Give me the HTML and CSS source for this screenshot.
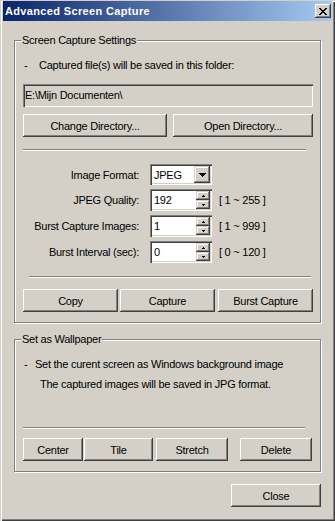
FILE: index.html
```html
<!DOCTYPE html>
<html lang="en">
<head>
    <meta charset="UTF-8">
    <meta name="viewport" content="width=device-width, initial-scale=1.0">
    <title>Advanced Screen Capture</title>
    <link rel="stylesheet" href="styles.css">
</head>
<body>
    <div class="window">
        <div class="titlebar">
            <span class="title">Advanced Screen Capture</span>
            <span class="close-box">
                <svg width="8" height="7" viewBox="0 0 8 7"><path d="M0 0h2v1H0zM6 0h2v1H6zM1 1h2v1H1zM5 1h2v1H5zM2 2h4v1H2zM3 3h2v1H3zM2 4h4v1H2zM1 5h2v1H1zM5 5h2v1H5zM0 6h2v1H0zM6 6h2v1H6z" fill="#000"/></svg>
            </span>
        </div>

        <div class="client">
            <div class="group group-capture">
                <div class="group-title">Screen Capture Settings</div>
                <p class="note"><span class="dash">-</span>Captured file(s) will be saved in this folder:</p>
                <div class="field field-path">E:\Mijn Documenten\</div>
                <div class="btn-row dir-row">
                    <button class="btn btn-change">Change Directory...</button>
                    <button class="btn btn-open">Open Directory...</button>
                </div>
                <div class="sep sep-a"></div>

                <div class="settings">
                    <label>Image Format:</label>
                    <div class="field combo">
                        <span class="value">JPEG</span>
                        <span class="combo-arrow">
                            <svg width="7" height="4" viewBox="0 0 7 4"><path d="M0 0h7v1H0zM1 1h5v1H1zM2 2h3v1H2zM3 3h1v1H3z" fill="#000"/></svg>
                        </span>
                    </div>
                    <span></span>

                    <label>JPEG Quality:</label>
                    <div class="field spin">
                        <span class="value">192</span>
                        <span class="spin-btns">
                            <span class="spin-btn"><svg width="3" height="2" viewBox="0 0 3 2"><path d="M1 0h1v1H1zM0 1h3v1H0z" fill="#000"/></svg></span>
                            <span class="spin-btn"><svg width="3" height="2" viewBox="0 0 3 2"><path d="M0 0h3v1H0zM1 1h1v1H1z" fill="#000"/></svg></span>
                        </span>
                    </div>
                    <span class="range">[ 1 ~ 255 ]</span>

                    <label>Burst Capture Images:</label>
                    <div class="field spin">
                        <span class="value">1</span>
                        <span class="spin-btns">
                            <span class="spin-btn"><svg width="3" height="2" viewBox="0 0 3 2"><path d="M1 0h1v1H1zM0 1h3v1H0z" fill="#000"/></svg></span>
                            <span class="spin-btn"><svg width="3" height="2" viewBox="0 0 3 2"><path d="M0 0h3v1H0zM1 1h1v1H1z" fill="#000"/></svg></span>
                        </span>
                    </div>
                    <span class="range">[ 1 ~ 999 ]</span>

                    <label>Burst Interval (sec):</label>
                    <div class="field spin">
                        <span class="value">0</span>
                        <span class="spin-btns">
                            <span class="spin-btn"><svg width="3" height="2" viewBox="0 0 3 2"><path d="M1 0h1v1H1zM0 1h3v1H0z" fill="#000"/></svg></span>
                            <span class="spin-btn"><svg width="3" height="2" viewBox="0 0 3 2"><path d="M0 0h3v1H0zM1 1h1v1H1z" fill="#000"/></svg></span>
                        </span>
                    </div>
                    <span class="range">[ 0 ~ 120 ]</span>
                </div>

                <div class="sep sep-b"></div>
                <div class="btn-row capture-row">
                    <button class="btn btn-third">Copy</button>
                    <button class="btn btn-third btn-capture">Capture</button>
                    <button class="btn btn-third btn-burst">Burst Capture</button>
                </div>
            </div>

            <div class="group group-wallpaper">
                <div class="group-title">Set as Wallpaper</div>
                <p class="note"><span class="dash dash-short">-</span>Set the curent screen as Windows background image</p>
                <p class="note note-sub">The captured images will be saved in JPG format.</p>
                <div class="sep sep-c"></div>
                <div class="btn-row wall-row">
                    <button class="btn btn-center">Center</button>
                    <button class="btn btn-tile">Tile</button>
                    <button class="btn btn-stretch">Stretch</button>
                    <button class="btn btn-delete">Delete</button>
                </div>
            </div>

            <div class="footer">
                <button class="btn btn-close">Close</button>
            </div>
        </div>
    </div>
</body>
</html>
```

FILE: styles.css
```css
body {
    margin: 0;
    padding: 0;
    background-color: #d4d0c8;
    font-family: "Liberation Sans", Arial, sans-serif;
    font-size: 11px;
    letter-spacing: -0.25px;
    color: #000;
}
.window {
    width: 335px;
    height: 521px;
    box-sizing: border-box;
    padding: 1px 3px 3px 3px;
    background-color: #d4d0c8;
    box-shadow: inset 1px 1px #d4d0c8, inset 2px 2px #fff, inset -1px -1px #404040, inset -2px -2px #808080;
}
.titlebar {
    height: 20px;
    display: flex;
    align-items: center;
    justify-content: space-between;
    background: linear-gradient(to right, #0a246a, #a6caf0);
}
.title {
    padding-left: 2px;
    color: #fff;
    font-weight: bold;
    letter-spacing: 0.35px;
}
.close-box {
    width: 16px;
    height: 14px;
    margin-right: 1px;
    display: flex;
    align-items: center;
    justify-content: center;
    background-color: #d4d0c8;
    box-shadow: inset -1px -1px #404040, inset 1px 1px #fff, inset -2px -2px #808080;
}
.client {
    padding: 19px 11px 0 11px;
}
.group {
    border: 1px solid #808080;
    box-shadow: inset 1px 1px #fff, 1px 1px #fff;
    padding: 0 7px 10px 8px;
}
.group-wallpaper {
    margin-top: 16px;
}
.group-title {
    width: max-content;
    height: 13px;
    line-height: 13px;
    margin: -7px 0 0 -2px;
    padding: 0 1px;
    background-color: #d4d0c8;
}
.note {
    margin: 12px 0 0 0;
    height: 13px;
    line-height: 13px;
    padding-left: 1px;
    white-space: nowrap;
}
.dash {
    display: inline-block;
    width: 15px;
}
.dash-short {
    width: 11px;
}
.note-sub {
    margin-top: 7px;
    padding-left: 17px;
}
.field {
    box-sizing: border-box;
    box-shadow: inset 1px 1px #808080, inset 2px 2px #404040, inset -1px -1px #fff, inset -2px -2px #d4d0c8;
}
.field-path {
    margin-top: 12px;
    height: 23px;
    line-height: 23px;
    padding-left: 2px;
    background-color: #d4d0c8;
}
.btn-row {
    display: flex;
}
.btn {
    box-sizing: border-box;
    height: 23px;
    padding: 0;
    border: none;
    background-color: #d4d0c8;
    font: inherit;
    letter-spacing: inherit;
    color: #000;
    box-shadow: inset -1px -1px #404040, inset 1px 1px #fff, inset -2px -2px #808080, inset 2px 2px #d4d0c8;
}
.dir-row {
    margin-top: 7px;
}
.btn-change {
    width: 144px;
}
.btn-open {
    width: 140px;
    margin-left: 6px;
}
.sep {
    height: 0;
    border-top: 1px solid #808080;
    border-bottom: 1px solid #fff;
}
.sep-a {
    margin-top: 12px;
    width: 283px;
}
.sep-b {
    margin: 13px 0 0 6px;
    width: 282px;
}
.sep-c {
    margin-top: 36px;
    width: 282px;
}
.settings {
    margin-top: 13px;
    display: grid;
    grid-template-columns: 116px 62px auto;
    grid-auto-rows: 22px;
    grid-template-rows: 21px;
    column-gap: 11px;
    row-gap: 4px;
    align-items: center;
}
.settings label {
    text-align: right;
    white-space: nowrap;
}
.combo, .spin {
    height: 100%;
    display: flex;
    align-items: center;
    justify-content: space-between;
    padding: 2px;
    background-color: #fff;
}
.value {
    padding-left: 2px;
}
.combo-arrow {
    width: 16px;
    height: 17px;
    display: flex;
    align-items: center;
    justify-content: center;
    background-color: #d4d0c8;
    box-shadow: inset -1px -1px #404040, inset 1px 1px #d4d0c8, inset -2px -2px #808080, inset 2px 2px #fff;
}
.spin-btns {
    width: 14px;
    height: 100%;
    display: flex;
    flex-direction: column;
}
.spin-btn {
    flex: 1;
    display: flex;
    align-items: center;
    justify-content: center;
    background-color: #d4d0c8;
    box-shadow: inset -1px -1px #404040, inset 1px 1px #d4d0c8, inset -2px -2px #808080, inset 2px 2px #fff;
}
.range {
    margin-left: -4px;
    white-space: nowrap;
}
.capture-row {
    margin-top: 11px;
}
.btn-third {
    width: 95px;
}
.btn-capture {
    margin-left: 2px;
}
.btn-burst {
    margin-left: 3px;
}
.wall-row {
    margin-top: 9px;
}
.btn-center {
    width: 60px;
}
.btn-tile {
    width: 69px;
    margin-left: 1px;
}
.btn-stretch {
    width: 72px;
    margin-left: 3px;
}
.btn-delete {
    width: 72px;
    margin-left: 12px;
}
.footer {
    margin-top: 12px;
    display: flex;
    justify-content: flex-end;
}
.btn-close {
    width: 90px;
}
```
